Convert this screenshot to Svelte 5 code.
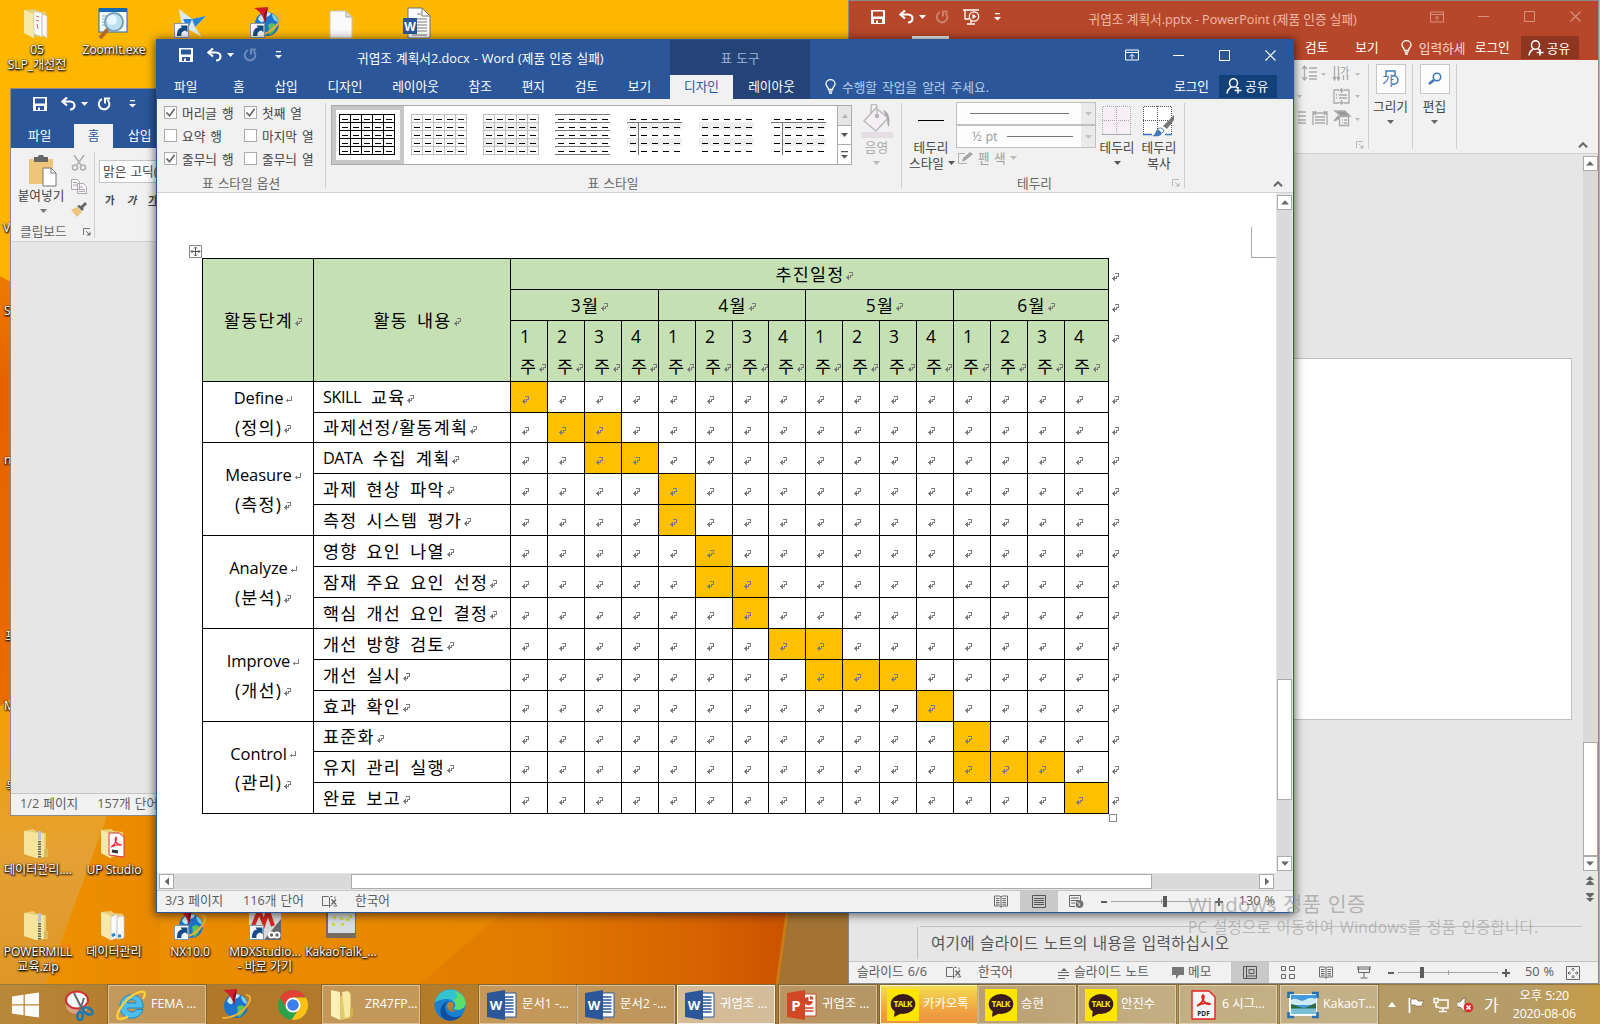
<script>
  const phases = [
    { en: 'Define', ko: '(정의)', tasks: [['교육', [0], 'SKILL'], ['과제선정/활동계획', [1, 2]]] },
    { en: 'Measure', ko: '(측정)', tasks: [['수집 계획', [2, 3], 'DATA'], ['과제 현상 파악', [4]], ['측정 시스템 평가', [4]]] },
    { en: 'Analyze', ko: '(분석)', tasks: [['영향 요인 나열', [5]], ['잠재 주요 요인 선정', [5, 6]], ['핵심 개선 요인 결정', [6]]] },
    { en: 'Improve', ko: '(개선)', tasks: [['개선 방향 검토', [7, 8]], ['개선 실시', [8, 9, 10]], ['효과 확인', [11]]] },
    { en: 'Control', ko: '(관리)', tasks: [['표준화', [12]], ['유지 관리 실행', [12, 13, 14]], ['완료 보고', [15]]] }
  ];
  const months = ['3월', '4월', '5월', '6월'];
  const weeks = Array.from({ length: 16 }, (_, i) => i);
  const tabs = ['파일', '홈', '삽입', '디자인', '레이아웃', '참조', '편지', '검토', '보기'];
  const options = [
    ['머리글 행', true], ['첫째 열', true],
    ['요약 행', false], ['마지막 열', false],
    ['줄무늬 행', true], ['줄무늬 열', false]
  ];
  const styles = ['black', 'grid', 'gridband', 'lines', 'first', 'band', 'firstband'];
  const five = [0, 1, 2, 3, 4];
  const desktop = [
    { x: 37, y: 7, icon: 'folder', label: ['05', 'SLP_개선전'] },
    { x: 114, y: 7, icon: 'zoomit', label: ['ZoomIt.exe'] },
    { x: 190, y: 7, icon: 'shard', label: [] },
    { x: 266, y: 7, icon: 'nx', label: [] },
    { x: 341, y: 7, icon: 'page', label: [] },
    { x: 416, y: 7, icon: 'worddoc', label: [] },
    { x: 38, y: 827, icon: 'zip', label: ['데이터관리....'] },
    { x: 114, y: 827, icon: 'pdffolder', label: ['UP Studio'] },
    { x: 38, y: 909, icon: 'zip', label: ['POWERMILL', '교육.zip'] },
    { x: 114, y: 909, icon: 'folderdocs', label: ['데이터관리'] },
    { x: 190, y: 909, icon: 'nx', label: ['NX10.0'] },
    { x: 265, y: 909, icon: 'mdx', label: ['MDXStudio...', '- 바로 가기'] },
    { x: 341, y: 909, icon: 'photo', label: ['KakaoTalk_...'] }
  ];
  const strays = [
    { x: 3, y: 220, t: 'V' }, { x: 4, y: 303, t: 'S' }, { x: 4, y: 452, t: 'n' },
    { x: 5, y: 629, t: '프' }, { x: 4, y: 698, t: 'M' }, { x: 6, y: 779, t: '목' }
  ];
  const tasks = [
    { kind: 'start', icon: 'start' },
    { kind: 'plain', icon: 'snip' },
    { kind: 'open', icon: 'ie', label: 'FEMA ...' },
    { kind: 'plain', icon: 'nxb' },
    { kind: 'plain', icon: 'chrome' },
    { kind: 'open', icon: 'explorer', label: 'ZR47FP...' },
    { kind: 'plain', icon: 'edge' },
    { kind: 'open', icon: 'word', label: '문서1 -...' },
    { kind: 'open', icon: 'word', label: '문서2 -...' },
    { kind: 'open active', icon: 'word', label: '귀엽조 ...' },
    { kind: 'open', icon: 'ppt', label: '귀엽조 ...' },
    { kind: 'open alert', icon: 'talk', label: '카카오톡' },
    { kind: 'open', icon: 'talk', label: '승현' },
    { kind: 'open', icon: 'talk', label: '안진수' },
    { kind: 'open', icon: 'pdf', label: '6 시그...' },
    { kind: 'open', icon: 'picture', label: 'KakaoT...' }
  ];
</script>

{#snippet mark(latin)}
  <svg class="mark" width="8" height="8" viewBox="0 0 8 8" fill="none" stroke="#7c7c7c" shape-rendering="crispEdges">
    {#if latin}
      <path d="M6.500 0v5M7 4.500H1" /><path d="M2.500 3v3M1.500 4v1" />
    {:else}
      <path d="M3 .5h4M6.500 0v4M7 3.500H4M4.500 3v3M5 5.500H0" /><path d="M1.500 4v3M2.500 3v5" />
    {/if}
  </svg>
{/snippet}

{#snippet caret(c)}
  <svg class="caret" width="7" height="4" viewBox="0 0 7 4"><path d="M0 0h7L3.500 4z" fill={c} /></svg>
{/snippet}

{#snippet save()}
  <svg class="q-save" width="14" height="14" viewBox="0 0 14 14"><path fill="currentColor" fill-rule="evenodd" d="M0 0h14v14H0zM2 1.500v5h10v-5zM3 9v4h2v-2.500h2V13h4V9z" /></svg>
{/snippet}

{#snippet undo()}
  <svg width="15" height="14" viewBox="0 0 15 14" fill="none" stroke="currentColor" stroke-width="2.200"><path d="M1.500 4.500H9c6 0 6 8 0 8" /><path d="M6 .5l-4.500 4 4.500 4" /></svg>
{/snippet}

{#snippet redo()}
  <svg width="14" height="14" viewBox="0 0 14 14" fill="none" stroke="currentColor" stroke-width="2"><path d="M5 2.200A5.300 5.300 0 1 0 10.500 3" /><path d="M8 6.500V1.500h5" /></svg>
{/snippet}

{#snippet more()}
  <svg width="7" height="8" viewBox="0 0 7 8" fill="currentColor"><path d="M1 0h5v1.200H1zM0 4h7L3.500 7.500z" /></svg>
{/snippet}

{#snippet winButtons()}
  <div class="win-buttons">
    <svg width="14" height="12" viewBox="0 0 14 12" fill="none" stroke="currentColor"><path d="M.5 1h13v10H.5zM.5 3.500h13M7 10V5.500M4.800 7.500L7 5.300l2.200 2.200" /></svg>
    <svg width="11" height="11" viewBox="0 0 11 11" stroke="currentColor"><path d="M0 5.500h11" /></svg>
    <svg width="11" height="11" viewBox="0 0 11 11" fill="none" stroke="currentColor"><path d="M.5.5h10v10H.5z" /></svg>
    <svg width="11" height="11" viewBox="0 0 11 11" stroke="currentColor" stroke-width="1.200"><path d="M.5.5l10 10M10.500.5l-10 10" /></svg>
  </div>
{/snippet}

{#snippet bulb()}
  <svg width="11" height="15" viewBox="0 0 11 15" fill="none" stroke="currentColor" stroke-width="1.300"><path d="M3.500 10.500C3.500 8 1 7.500 1 5a4.500 4.300 0 0 1 9 0c0 2.500-2.500 3-2.500 5.500z" /><path d="M3.500 12.200h4M4 14h3" /></svg>
{/snippet}

{#snippet share()}
  <svg width="16" height="16" viewBox="0 0 16 16" fill="none" stroke="currentColor" stroke-width="1.500"><ellipse cx="7.500" cy="5" rx="4" ry="4.300" /><path d="M1 15.500c.5-4 2.500-5.500 4.500-6.500M10 9l1.500 1M12 9v6.500M8.700 12.500h6.800" /></svg>
{/snippet}

{#snippet launcher(c)}
  <svg class="launcher" width="8" height="8" viewBox="0 0 8 8" fill="none" stroke={c}><path d="M.5 7V.5H7M3 3l4 4" /><path d="M7.500 3.500v4h-4z" fill={c} stroke="none" /></svg>
{/snippet}

{#snippet collapse()}
  <svg class="collapse" width="10" height="6" viewBox="0 0 10 6" fill="none" stroke="#666" stroke-width="2"><path d="M1 5.200l4-4 4 4" /></svg>
{/snippet}

{#snippet arrow(dir)}
  <span class="sbtn">
    <svg class={dir} width="8" height="5" viewBox="0 0 8 5"><path d="M0 4.500h8L4 .3z" fill="#686868" /></svg>
  </span>
{/snippet}

{#snippet book()}
  <svg width="16" height="13" viewBox="0 0 16 13" fill="none" stroke="#6a6a6a"><path d="M7.500 11.500l-1-1h-6v-9h6l1 1 1-1h2M7.500 2.500v10M7.500 11.500l1-1h1M13 1.500v2M14.500 10v1h-3" /><path d="M9.500 4.500l4.500 5M14 4.500l-4.500 5" stroke-width="1.500" /></svg>
{/snippet}

{#snippet reading()}
  <svg width="14" height="13" viewBox="0 0 14 13" fill="none" stroke="#6a6a6a"><path d="M.5 1h5L7 2l1.500-1h5v10h-5L7 12l-1.500-1h-5zM7 2v10.500M2 3.500h3.500M2 5.500h3.500M2 7.500h3.500M2 9.200h3.500M8.500 3.500H12M8.500 5.500H12M8.500 7.500H12M8.500 9.200H12" /></svg>
{/snippet}

{#snippet zoomBar(handle, tick)}
  <svg class="zoombar" width="122" height="13" viewBox="0 0 122 13">
    <path d="M0 6h6v2H0zM114 6h8v2h-8zM117 3h2v8h-2z" fill="#5c5c5c" />
    <path d="M10 6.500h100" stroke="#a6a6a6" /><path d="M{tick}.5 4v5" stroke="#a6a6a6" />
    <rect x={handle} y="1" width="4" height="11" fill="#5c5c5c" />
  </svg>
{/snippet}

{#snippet globe()}
  <circle cx="17" cy="17" r="12" fill="#1c74cc" />
  <path d="M8 12c2-5 8-8 13-6-1 4-6 3-7 7s-4 2-6-1z" fill="#c9ecf9" />
  <path d="M18 18c3-3 7-2 8 1-1 5-3 7-6 9-3-2 0-6-2-10z" fill="#5cc35a" />
  <path d="M22 7c4 1 6 5 6 8-3 0-6-4-6-8z" fill="#7bd2ee" />
  <path d="M27 6c8 0 4 12-10 20-7 3-14 4-13 2" fill="none" stroke="#eeae33" stroke-width="2" />
  <path d="M4 1l14-1-3 16C13 9 10 4 4 1z" fill="#cf1d2d" /><path d="M18 0l-3 16-1-9z" fill="#8d0e1e" />
{/snippet}

{#snippet shortcut()}
  <rect x=".5" y="16.500" width="14" height="14" fill="#f4f6f8" stroke="#8a97a8" /><path d="M3 29c0-6 2-8 5-8.500L6.500 18.500h7v7l-2-2C8 24 7 26 7.500 29z" fill="#174b85" />
{/snippet}

{#snippet folder()}
  <path d="M3 3l10-1 3 2 9 1v22l-13 4-9-5z" fill="#e9ce79" /><path d="M3 3l10 4v24l-10-5z" fill="#f8e9a8" /><path d="M13 7l4-2v24l-4 2z" fill="#dcb95a" />
{/snippet}

{#snippet icon(name)}
  <svg class="ico" width="32" height="32" viewBox="0 0 32 32">
    {#if name === 'folder'}
      {@render folder()}
      <path d="M13 4l8 2v24l-8-3zM21 7l5 2v22l-5-3z" fill="#fafafa" stroke="#c8c4b8" stroke-width=".7" /><path d="M15 9l3 1M15 13l3 1M16 17l1 5" stroke="#d66" />
    {:else if name === 'folderdocs'}
      {@render folder()}
      <path d="M13 8l6-3v24l-6 2zM19 8l7-1v22l-7 1z" fill="#fafafa" stroke="#c9c9c9" stroke-width=".7" /><path d="M14 27l3-2M20 27h3" stroke="#2785c8" stroke-width="3" />
    {:else if name === 'pdffolder'}
      {@render folder()}
      <path d="M11 6h10l5 4v20l-15-2z" fill="#fff" stroke="#d34" stroke-width="1" /><path d="M13 20c5-3 6-8 5-10-2 3 0 8 6 8-4-1-7 0-11 2z" fill="none" stroke="#e23" stroke-width="1.200" /><path d="M14 24l6 1" stroke="#333" stroke-width="3" />
    {:else if name === 'zip'}
      <path d="M2 4l9-2 4 3 9 1v23l-9 2-13-4z" fill="#e9ce79" /><path d="M2 4l20 3v23l-8 1-12-4z" fill="#f6e49a" /><path d="M22 22h4v8h-4z" fill="#d7bb5d" /><path d="M17.500 4v27" stroke="#5c6773" stroke-width="3" stroke-dasharray="1.500 1" /><path d="M16 4h3v9h-3z" fill="#b4c4d5" />
    {:else if name === 'zoomit'}
      <rect x="1" y="2" width="28" height="23" fill="#f4f9fc" stroke="#176fb0" /><path d="M1 1h28v4H1z" fill="#1669b2" /><path d="M4 9h10M4 12h8M4 15h8M4 18h8" stroke="#92a5b4" /><path d="M10 22l-8 9" stroke="#b76531" stroke-width="4" /><circle cx="16" cy="15" r="9" fill="#bde1f4" stroke="#7b9eb4" stroke-width="2" /><circle cx="14" cy="13" r="5" fill="#e7f7fe" />
    {:else if name === 'shard'}
      <path d="M5 2l13 10 14-3-11 11 7 10-14-8-4 9z" fill="#dce9f6" /><path d="M18 12l14-3-11 11zM9 12l9 0-4 10z" fill="#2684d8" />{@render shortcut()}
    {:else if name === 'nx'}
      {@render globe()}{@render shortcut()}
    {:else if name === 'nxb'}
      {@render globe()}
    {:else if name === 'page'}
      <path d="M5 4h16l6 6v21H5z" fill="#fafafa" stroke="#c9c3b6" /><path d="M21 4v6h6" fill="#ddd" stroke="#aaa" />
    {:else if name === 'worddoc'}
      <path d="M8 1h14l8 8v22H8z" fill="#fff" stroke="#6b7585" /><path d="M22 1v8h8M17 7h4M17 12h10M17 15h10M17 18h10M17 21h10M17 24h10M12 28h15" fill="none" stroke="#777" /><rect x="3" y="11" width="14" height="16" fill="#2b579a" /><text x="10" y="23.500" text-anchor="middle" font-size="12" font-weight="700" fill="#fff">W</text>
    {:else if name === 'mdx'}
      <path d="M0 0h32v31H0z" fill="#d8d8d8" /><path d="M32 10v21H15z" fill="#666" /><path d="M4 17L10 2l5 12 4-12 5 15" fill="none" stroke="#d4281c" stroke-width="4" /><circle cx="22.500" cy="26" r="2.600" fill="none" stroke="#fff" stroke-width="1.800" /><circle cx="28" cy="26" r="2.600" fill="none" stroke="#fff" stroke-width="1.800" />{@render shortcut()}
    {:else if name === 'photo'}
      <path d="M1 0h30v29H1z" fill="#756b60" /><path d="M3 0h27v24H3z" fill="#d7dce0" /><path d="M8 7h3v3H8zM15 8h3v3h-3zM24 6h3v3h-3zM7 14h3v3H7zM16 14h3v3h-3zM21 9h3v3h-3z" fill="#cddc3a" />
    {:else if name === 'start'}
      <path d="M3 7.500l11.500-1.700V15.300H3zM15.800 5.600L30 3.500v11.800H15.800zM3 16.500h11.500v9.700L3 24.500zM15.800 16.500H30v12l-14.200-2.100z" fill="#fff" />
    {:else if name === 'snip'}
      <ellipse cx="14" cy="17" rx="11" ry="8" fill="#d7a185" /><ellipse cx="14" cy="11" rx="11" ry="8.500" fill="#fafafa" stroke="#cf2f31" stroke-width="2" /><path d="M11 4l10 20M21 9L16 24" stroke="#606b72" stroke-width="2" /><ellipse cx="25" cy="22" rx="5" ry="3" fill="none" stroke="#1578b8" stroke-width="2.500" transform="rotate(30 25 22)" /><ellipse cx="17" cy="27" rx="2.800" ry="4" fill="none" stroke="#1578b8" stroke-width="2.500" />
    {:else if name === 'ie'}
      <path d="M28 19H12.500c.5 5 7 5 8.500 1.500h7C24.500 33 5 32 5 17.500 5 2 29 1 28 19zM12.500 14H21c-.8-4.500-7.700-4.500-8.500 0z" fill="#4fbdec" stroke="#1c86c7" /><path d="M5 30c-8 0 3-20 17-26 7-3 10-1 6 6M5 30c3 0 6-1 8-3" fill="none" stroke="#ffcf35" stroke-width="2.400" />
    {:else if name === 'chrome'}
      <circle cx="16" cy="16" r="15" fill="#2ba24c" /><path d="M3 8.500A15 15 0 0 1 29 8.500H16l-6.500 11z" fill="#e34133" /><path d="M16 8.500h13A15 15 0 0 1 14.500 31l7.500-11.500z" fill="#fbc116" /><circle cx="16" cy="16" r="7.500" fill="#fff" /><circle cx="16" cy="16" r="5.800" fill="#3f7fec" />
    {:else if name === 'explorer'}
      <path d="M2 1l9 2v28l-9-4z" fill="#fcf0b6" /><path d="M11 8l6-4 5 1v24l-11 2z" fill="#e5c96f" /><path d="M13 3l6-1 2 2v23l-5 2z" fill="#f8e9a5" /><path d="M21 19h3v8l-3 3z" fill="#d4b34f" />
    {:else if name === 'edge'}
      <circle cx="16" cy="16" r="15.500" fill="#187fd1" /><path d="M1 14C3-4 30-4 31.500 14c0 6-7 8-12 6 4-4 0-10-6-10-6 0-11 2-12.500 4z" fill="#35c3d0" /><path d="M20 2c7 2 12 7 11.500 13-1 5-7 7-12 5 4-4 2-8-1-9 7-1 5-6 1.500-9z" fill="#5ddd69" /><path d="M11 18c0 8 8 13 17 8-5 7-18 8-21 0-2-8 3-14 9-14-3 1-5 3-5 6z" fill="#114f9e" /><path d="M14 14c3-3 7 0 5 4-2 2 0 4 4 4-7 3-12-3-9-8z" fill="#b9812f" />
    {:else if name === 'word'}
      <path d="M17 4h13v24H17z" fill="#fff" stroke="#2b579a" /><path d="M19 8h8.500M19 11h8.500M19 14h8.500M19 17h8.500M19 20h8.500M19 23h8.500" stroke="#2b579a" stroke-width="1.300" /><path d="M1 4l18-3v30L1 28z" fill="#2b579a" /><text x="10" y="21" text-anchor="middle" font-size="13" font-weight="700" fill="#fff">W</text>
    {:else if name === 'ppt'}
      <path d="M17 5h13v22H17z" fill="#fff" stroke="#d24726" /><path d="M19 19h8.500M19 22h8.500" stroke="#d24726" stroke-width="1.500" /><circle cx="22.500" cy="12" r="4.300" fill="#d24726" /><path d="M22.500 12V7a5 5 0 0 1 5 5z" fill="#fff" /><path d="M24 10.500V7a4 4 0 0 1 3.500 3.500z" fill="#d24726" /><path d="M1 4l18-3v30L1 28z" fill="#d24726" /><text x="10" y="22" text-anchor="middle" font-size="15" font-weight="700" fill="#fff">P</text>
    {:else if name === 'talk'}
      <path d="M0 0h32v32H0z" fill="#fee500" /><ellipse cx="16" cy="15" rx="12.300" ry="10" fill="#391b1b" /><path d="M8 20l-1 8 8-4z" fill="#391b1b" /><text x="16" y="18.300" text-anchor="middle" font-size="8.500" font-weight="700" fill="#fee500" textLength="19">TALK</text>
    {:else if name === 'pdf'}
      <path d="M6 2h17l6 6v22H6z" fill="#f6f6f6" stroke="#e32222" stroke-width="1.400" stroke-linejoin="round" /><path d="M11 17c7-4 8-10 6-11-3 1 2 11 7 9-3-2-10 0-13 2z" fill="none" stroke="#e32222" stroke-width="1.600" /><text x="17.500" y="27" text-anchor="middle" font-size="6.500" font-weight="700" fill="#222">PDF</text>
    {:else if name === 'picture'}
      <path d="M2 5h28v22H2z" fill="#fff" /><path d="M4 6h25v19H4z" fill="#4599dd" /><path d="M4 11c6-4 9 3 14 0s8-2 11-1v6H4z" fill="#cdeaf8" /><path d="M4 15c6 1 10 4 13 4s8-4 12-5v6H4z" fill="#2e6d43" /><path d="M4 19.500h25V25H4z" fill="#79c0d8" /><path d="M1.500 9V4H7M25 4h5.500v5M1.500 23v5H7M25 28h5.500v-5" fill="none" stroke="#256fae" stroke-width="2.600" />
    {/if}
  </svg>
{/snippet}

{#snippet thumb(kind)}
  <svg width="56" height="42" viewBox="0 0 56 42" shape-rendering="crispEdges">
    {#if kind === 'gridband' || kind === 'band'}<path d="M0 8h55v8H0zM0 24h55v8H0z" fill="#f0f0f0" />{/if}
    {#if kind === 'first' || kind === 'firstband'}<path d="M0 8h55v8H0zM0 24h55v8H0z" fill="#f0f0f0" />{/if}
    {#if kind === 'firstband'}<path d="M0 9h11v23H0z" fill="#fff" />{/if}
    {#if kind === 'first' || kind === 'firstband'}<path d="M0 8.500h55M11.500 9v32" stroke="#777" />{/if}
    {#if kind === 'black' || kind === 'grid' || kind === 'gridband'}
      <path d="M0 .5h56M0 8.500h56M0 16.500h56M0 24.500h56M0 32.500h56M0 40.500h56M.5 0v41M11.500 0v41M22.500 0v41M33.500 0v41M44.500 0v41M55.500 0v41" stroke={kind === 'black' ? '#000' : '#bfbfbf'} />
    {/if}
    {#if kind === 'lines'}<path d="M0 .5h55M0 8.500h55M0 16.500h55M0 24.500h55M0 32.500h55M0 40.500h55" stroke="#777" />{/if}
    {#each five as r}
      {#each five as c}<rect x={3 + c * 11} y={5 + r * 8} width="6" height="1" fill="#000" />{/each}
    {/each}
  </svg>
{/snippet}

<main class="screen">
  <svg class="wallpaper" width="1600" height="1024" viewBox="0 0 1600 1024">
    <defs>
      <linearGradient id="top" x1="0" y1="0" x2="0" y2="1"><stop offset="0" stop-color="#feb800" /><stop offset="1" stop-color="#f9a800" /></linearGradient>
      <linearGradient id="mid" x1="0" y1="0" x2="0" y2="1"><stop offset="0" stop-color="#ee7a00" /><stop offset=".25" stop-color="#e56300" /><stop offset="1" stop-color="#e96c00" /></linearGradient>
      <linearGradient id="low" x1="0" y1="0" x2="1" y2="0"><stop offset="0" stop-color="#ef9400" /><stop offset=".3" stop-color="#e68300" /><stop offset=".65" stop-color="#e27c00" /><stop offset=".88" stop-color="#d66200" /><stop offset="1" stop-color="#c85000" /></linearGradient>
      <linearGradient id="pale" x1="0" y1="0" x2="0" y2="1"><stop offset="0" stop-color="#f4a000" /><stop offset=".5" stop-color="#e4a034" /><stop offset="1" stop-color="#dd9322" /></linearGradient>
    </defs>
    <rect width="1600" height="1024" fill="url(#top)" />
    <path d="M0 276l160 90v340L0 710z" fill="url(#mid)" />
    <path d="M0 800h800v224H0z" fill="url(#low)" />
    <path d="M0 706l12-8v118h95L31 1024H0z" fill="url(#pale)" />
    <path d="M420 984l82-71H160v71z" fill="#f29a00" opacity=".35" />
    <path d="M787 913h70v111h-87z" fill="#a27332" />
    <path d="M787 913l-10 71" stroke="#cc7a18" stroke-width="3" />
    <path d="M1500 984h100v40z" fill="#dba126" />
  </svg>

  {#each strays as s}
    <span class="stray" style:left="{s.x}px" style:top="{s.y}px">{s.t}</span>
  {/each}
  {#each desktop as d}
    <figure class="shortcut" style:left="{d.x - 45}px" style:top="{d.y}px">
      {@render icon(d.icon)}
      <figcaption>{#each d.label as line}<span>{line}</span>{/each}</figcaption>
    </figure>
  {/each}

  <!-- PowerPoint window -->
  <section class="window ppt">
    <header>
      <div class="title-row">
        <div class="qat">
          {@render save()}
          <i class="g16">{@render undo()}</i>
          <i class="g5">{@render caret('#fff')}</i>
          <i class="g10 dim">{@render redo()}</i>
          <svg class="show" width="17" height="16" viewBox="0 0 17 16" fill="none" stroke="currentColor" stroke-width="1.300"><path d="M0 1h16M2 1v9h4M8 11v3M4 15h8" /><circle cx="11" cy="7.500" r="4.700" /><path d="M9.500 5l4 2.500-4 2.500z" fill="currentColor" stroke="none" /></svg>
          <i class="g16">{@render more()}</i>
        </div>
        <h2>귀엽조 계획서.pptx - PowerPoint (제품 인증 실패)</h2>
        {@render winButtons()}
      </div>
      <div class="tab-row">
        <span class="sliver"></span>
        <span class="t1">검토</span><span class="t2">보기</span>
        <span class="tell">{@render bulb()}입력하세</span>
        <span class="login">로그인</span>
        <span class="share">{@render share()}공유</span>
      </div>
    </header>
    <div class="ribbon">
      <div class="group para">
        <svg width="62" height="66" viewBox="0 0 62 66" fill="none" stroke="#aaa" stroke-width="1.300">
          <path d="M3.500 2v14M1 5l2.500-3L6 5M1 13l2.500 3L6 13M8 4h8M8 8h8M8 12h8M8 15h8" />
          <path d="M33.500 2v14M37.500 2v14M32 13l1.500 3 1.500-3M36 13l1.500 3 1.500-3M42.500 11v5M46.500 11v5" />
          <path d="M38 26h-5v13h5M43 26h5v13h-5M40.500 24v5M38.500 27l2-2 2 2M40.500 41v-5M38.500 38l2 2 2-2M35 31h1M38 31h8M35 34h1M38 34h8" />
          <path d="M-3 48h8M-3 52h8M-3 56h8M-3 59h8M12 47v14M26 47v14M13 49h11M15 47l-2 2 2 2M23 47l2 2-2 2M14 53h10M14 56h10M14 59h10" />
          <path d="M34 47l6 5h9l-5-5zM33 57l4-5 3 2z" fill="#999" /><path d="M38.500 52.500h9v9h-9z" fill="#f4f0f4" /><path d="M41 56h1M43 56h3M41 59h1M43 59h3" />
          <path d="M20 9h5l-2.500 3zM54 9h5l-2.500 3zM54 31h5l-2.500 3zM54 54h5l-2.500 3zM-4 31h5l-2.500 3z" fill="#bbb" stroke="none" />
          <text x="39" y="11" font-size="10" fill="#999" stroke="none">가</text>
        </svg>
        {@render launcher('#bbb')}
      </div>
      <div class="group tall">
        <span class="tile"><svg width="18" height="18" viewBox="0 0 18 18" fill="none" stroke="#3f78b8" stroke-width="1.400"><path d="M4 6V1h9v5M10 6c8-2 8 10 0 8" /><text x="0" y="15" font-size="13" fill="#3f78b8" stroke="none">가</text></svg></span>
        <b>그리기</b>{@render caret('#666')}
      </div>
      <div class="group tall">
        <span class="tile"><svg width="14" height="14" viewBox="0 0 14 14" fill="none" stroke="#3f78b8"><circle cx="9" cy="5" r="3.700" stroke-width="1.600" /><path d="M6 8l-5 4" stroke-width="2.600" /></svg></span>
        <b>편집</b>{@render caret('#666')}
      </div>
      {@render collapse()}
    </div>
    <div class="ppt-body">
      <div class="stage">
        <div class="slide-zone"><div class="slide"></div></div>
        <div class="notes"><p>여기에 슬라이드 노트의 내용을 입력하십시오</p></div>
      </div>
      <div class="vscroll">
        {@render arrow('up')}
        <span class="before"></span><span class="thumb"></span>
        {@render arrow('down')}
        <svg class="pages" width="8" height="28" viewBox="0 0 8 28" fill="#666"><path d="M0 5l4-4 4 4zM0 9l4-4 4 4zM0 19l4 4 4-4zM0 23l4 4 4-4zM0 9h8v1H0zM0 18h8v1H0z" /></svg>
      </div>
    </div>
    <footer>
      <span class="f1">슬라이드 6/6</span>
      <i class="f2">{@render book()}</i>
      <span class="f3">한국어</span>
      <svg class="f4" width="12" height="12" viewBox="0 0 12 12" stroke="#666" fill="#666"><path d="M0 5.500h11M0 8.500h11M0 11.500h7" /><path d="M3 4l3-3 3 3z" stroke="none" /></svg>
      <span class="f5">슬라이드 노트</span>
      <svg class="f6" width="12" height="12" viewBox="0 0 12 12"><path d="M0 0h12v8H7l-3 4V8H0z" fill="#777" /></svg>
      <span class="f7">메모</span>
      <i class="on"><svg width="14" height="13" viewBox="0 0 14 13" fill="none" stroke="#555"><path d="M.5.500h13v12H.5zM3.500.500v12M6 3.500h5v4H6zM3.500 10h10" /></svg></i>
      <i class="v"><svg width="14" height="13" viewBox="0 0 14 13" fill="none" stroke="#666"><path d="M.5.500h4v4h-4zM8.500.500h5v4h-5zM.5 8.500h4v4h-4zM8.500 8.500h5v4h-5z" /></svg></i>
      <i class="v">{@render reading()}</i>
      <i class="v"><svg width="14" height="13" viewBox="0 0 14 13" fill="none" stroke="#666"><path d="M0 1h14M1.500 1v5.500h11V1M0 3h14M7 6.500v5M3.500 12h7" /></svg></i>
      {@render zoomBar(32, 60)}
      <span class="f8">50 %</span>
      <svg class="f9" width="14" height="14" viewBox="0 0 14 14" fill="none" stroke="#666"><path d="M.5.500h13v13H.5zM7 2v3M5.500 3.500L7 2l1.500 1.500M7 12V9M5.500 10.500L7 12l1.500-1.500M2 7h3M3.500 5.500L2 7l1.500 1.500M12 7H9M10.500 5.500L12 7l-1.500 1.500" /></svg>
    </footer>
  </section>

  <!-- Word window behind -->
  <section class="window word-back">
    <header>
      <div class="qat">
        {@render save()}
        <i class="g16">{@render undo()}</i>
        <i class="g5">{@render caret('#fff')}</i>
        <i class="g10">{@render redo()}</i>
        <i class="g18">{@render more()}</i>
      </div>
      <div class="back-tabs"><span>파일</span><span class="active">홈</span><span>삽입</span></div>
    </header>
    <div class="ribbon">
      <div class="clip">
        <div class="clip-tools">
          <div class="paste">
            <svg width="30" height="32" viewBox="0 0 30 32"><path d="M1 4h24v25H1z" fill="#edc57c" /><path d="M6 2h4c0-3 6-3 6 0h4v5H6z" fill="#666" /><path d="M15 13h8l5 5v13H15z" fill="#fff" stroke="#777" /><path d="M23 13v5h5" fill="none" stroke="#777" /></svg>
            <b>붙여넣기</b>{@render caret('#777')}
          </div>
          <div class="mini">
            <svg width="16" height="16" viewBox="0 0 16 16" fill="none" stroke="#b0b0b0" stroke-width="1.600"><path d="M3 0l7 10M13 0L6 10" /><circle cx="4" cy="12.500" r="2.500" /><circle cx="12" cy="12.500" r="2.500" /></svg>
            <svg width="16" height="15" viewBox="0 0 16 15" fill="#f4f4f4" stroke="#b0a8b0"><path d="M.5.500h6l2 2v8h-8zM6.500 4.500h6l3 3v7h-9z" /><path d="M2 3.500h4M2 6h4M8 8h4M8 10.500h6M8 12.500h6" /></svg>
            <svg width="17" height="15" viewBox="0 0 17 15"><path d="M0 8l6-3 5 5-5 5z" fill="#edc57c" /><path d="M6 4l5 5 2-2-1-1 4-4-2-2-4 4-2-1z" fill="#666" /></svg>
          </div>
        </div>
        <div class="clip-label">클립보드 {@render launcher('#777')}</div>
      </div>
      <div class="font-box"><div class="font-name">맑은 고딕(본문</div><div class="ga"><b>가</b><b class="it">가</b><b class="ul">가</b></div></div>
    </div>
    <div class="back-doc"></div>
    <footer><span>1/2 페이지</span><span>157개 단어</span></footer>
  </section>

  <!-- Word window in front -->
  <section class="window word">
    <header>
      <div class="head-left">
        <div class="title-row">
          <div class="qat">
            {@render save()}
            <i class="g16">{@render undo()}</i>
            <i class="g5">{@render caret('#fff')}</i>
            <i class="g10 dim">{@render redo()}</i>
            <i class="g18">{@render more()}</i>
          </div>
          <h2>귀엽조 계획서2.docx - Word (제품 인증 실패)</h2>
        </div>
        <nav>{#each tabs as t}<span>{t}</span>{/each}</nav>
      </div>
      <div class="context">
        <div class="context-title">표 도구</div>
        <div class="context-tabs"><span class="active">디자인</span><span>레이아웃</span></div>
      </div>
      <div class="head-right">
        {@render winButtons()}
        <div class="tab-row">
          <span class="tell">{@render bulb()}수행할 작업을 알려 주세요.</span>
          <span class="login">로그인</span>
          <span class="share">{@render share()}공유</span>
        </div>
      </div>
    </header>

    <div class="ribbon">
      <div class="group opts">
        <div class="checks">
          {#each options as [label, on]}
            <label><span class="box">{#if on}<svg width="11" height="11" viewBox="0 0 11 11" fill="none" stroke="#666" stroke-width="1.700"><path d="M1.500 5.500l3 3.200L9.500 2" /></svg>{/if}</span>{label}</label>
          {/each}
        </div>
        <div class="glabel">표 스타일 옵션</div>
      </div>
      <div class="group styles">
        <div class="body">
          <div class="gallery">
            {#each styles as s, i}<span class="swatch" class:selected={i === 0}>{@render thumb(s)}</span>{/each}
            <div class="gscroll">
              <span class="off"><svg width="6" height="4" viewBox="0 0 6 4"><path d="M0 4h6L3 0z" fill="#b5b5b5" /></svg></span>
              <span>{@render caret('#555')}</span>
              <span><svg width="7" height="8" viewBox="0 0 7 8" fill="#555"><path d="M0 0h7v1.200H0zM0 4h7L3.500 7.500z" /></svg></span>
            </div>
          </div>
          <div class="big shade">
            <div class="pic"><svg width="34" height="34" viewBox="0 0 34 34" fill="none" stroke="#b8b8b8" stroke-width="1.400"><path d="M4 17L16 4l12 10-12 13z" fill="#f6f0f6" /><path d="M11 10V3c0-4 6-4 6 0v9" /><circle cx="17" cy="12" r="1.500" fill="#aaa" /><path d="M23 6c7 2 7 10 6 17-3-3-1-7-2-9z" fill="#aaa" stroke="none" /><path d="M1 28h32v6H1z" fill="#e5dfe5" stroke="none" /></svg></div>
            <b>음영</b><b>{@render caret('#bbb')}</b>
          </div>
        </div>
        <div class="glabel">표 스타일</div>
      </div>
      <div class="group borders">
        <div class="body">
          <div class="big bstyle"><div class="pic"><span class="rule"></span></div><b>테두리</b><b class="with">스타일 {@render caret('#555')}</b></div>
          <div class="combos">
            <div class="combo"><span class="stroke one"></span><i>{@render caret('#c3c3c3')}</i></div>
            <div class="combo"><em>½ pt</em><span class="stroke two"></span><i>{@render caret('#c3c3c3')}</i></div>
            <div class="pen"><svg width="16" height="13" viewBox="0 0 16 13" fill="none" stroke="#b0b0b0"><path d="M7 1.500H.5v10H9" /><path d="M4 10l1-4 7-6 3 2-7 6z" fill="#a6a6a6" stroke="none" /></svg>펜 색 {@render caret('#bbb')}</div>
          </div>
          <div class="big bd"><div class="pic"><svg width="30" height="30" viewBox="0 0 30 30" fill="none" stroke="#aaa"><path d="M.5.500h28v28H.5z" fill="#f6f0f6" stroke="none" /><path d="M.5 28V.500h28V28M14.500 0v28M0 14.500h28" stroke-dasharray="1 1" /><path d="M0 28.500h29" /></svg></div><b>테두리</b><b>{@render caret('#555')}</b></div>
          <div class="big bp"><div class="pic"><svg width="32" height="32" viewBox="0 0 32 32" fill="none" stroke="#555"><path d="M.5.500h28v28H.5z" fill="#fff" stroke="none" /><path d="M.5 28V.500h28V28M14.500 0v28M0 14.500h28" stroke-dasharray="1 1" /><path d="M0 28.500h9M22 28.500h7" stroke="#3f78b8" stroke-width="1.500" /><path d="M9 30c4-1 3-5 6-7l4 3c0 4-4 5-10 4z" fill="#3f78b8" stroke="none" /><path d="M15 23c2-2 5-1 6 2l-2 2" fill="#fff" stroke="#3f78b8" /><path d="M20 20l4 3 7-9V9z" fill="#777" stroke="none" /></svg></div><b>테두리</b><b>복사</b></div>
        </div>
        <div class="glabel">테두리{@render launcher('#bbb')}</div>
      </div>
      {@render collapse()}
    </div>

    <div class="doc-row">
      <div class="doc">
        <svg class="handle" width="13" height="13" viewBox="0 0 13 13" fill="none" stroke="#555"><path d="M.5.500h12v12H.5z" fill="#fff" stroke="#888" /><path d="M6.500 2v9M2 6.500h9M5 3.500l1.500-1.500L8 3.500M5 9.500L6.500 11 8 9.500M3.500 5L2 6.500 3.500 8M9.500 5L11 6.500 9.500 8" /></svg>
        <span class="corner"></span>
        <div class="plan">
          <div class="cell head tall-head"><span>활동단계</span>{@render mark(false)}</div>
          <div class="cell head tall-head"><span>활동 내용</span>{@render mark(false)}</div>
          <div class="cell head span-all"><span>추진일정</span>{@render mark(false)}</div>
          <div class="end">{@render mark(false)}</div>
          {#each months as m}<div class="cell head month"><span>{m}</span>{@render mark(false)}</div>{/each}
          <div class="end">{@render mark(false)}</div>
          {#each weeks as w}<div class="cell head week"><span>{(w % 4) + 1}</span><div><span>주</span>{@render mark(false)}</div></div>{/each}
          <div class="end">{@render mark(false)}</div>
          {#each phases as p}
            <div class="cell phase" style:grid-row="span {p.tasks.length}">
              <div><span class="en">{p.en}</span>{@render mark(true)}</div>
              <div><span>{p.ko}</span>{@render mark(false)}</div>
            </div>
            {#each p.tasks as [name, on, latin]}
              <div class="cell task">{#if latin}<span class="caps">{latin}</span>{/if}<span>{name}</span>{@render mark(false)}</div>
              {#each weeks as w}<div class="cell slot" class:on={on.includes(w)}>{@render mark(false)}</div>{/each}
              <div class="end">{@render mark(false)}</div>
            {/each}
          {/each}
        </div>
        <div class="plan-foot"></div>
        <span class="grip"></span>
      </div>
      <div class="vscroll">
        {@render arrow('up')}
        <span class="before"></span><span class="thumb"></span><span class="after"></span>
        {@render arrow('down')}
      </div>
    </div>
    <div class="hscroll">
      {@render arrow('left')}<span class="before"></span><span class="thumb"></span><span class="after"></span>{@render arrow('right')}
    </div>
    <footer>
      <span class="s1">3/3 페이지</span><span class="s2">116개 단어</span>
      <i class="s3">{@render book()}</i><span class="s4">한국어</span>
      <i class="v push">{@render reading()}</i>
      <i class="on"><svg width="14" height="13" viewBox="0 0 14 13" fill="none" stroke="#555"><path d="M.5.500h13v12H.5zM2 3.500h10M2 5.500h10M2 7.500h10M2 9.500h10" /></svg></i>
      <i class="v"><svg width="15" height="13" viewBox="0 0 15 13" fill="none" stroke="#666"><path d="M11.500 5V.500H.5v11H6M2 3h8M2 5.500h7M2 8h4" /><circle cx="10.500" cy="9" r="3.500" fill="#777" /><path d="M8 8c2-1 3 1 2 3" stroke="#fff" /></svg></i>
      {@render zoomBar(62, 60)}
      <span class="s5">130 %</span>
    </footer>
  </section>

  <div class="activate"><p class="w1">Windows 정품 인증</p><p class="w2">PC 설정으로 이동하여 Windows를 정품 인증합니다.</p></div>

  <!-- Taskbar -->
  <div class="taskbar">
    {#each tasks as t}
      <div class="task-item {t.kind}">{@render icon(t.icon)}{#if t.label}<span>{t.label}</span>{/if}</div>
    {/each}
    <div class="tray">
      <svg width="8" height="5" viewBox="0 0 8 5"><path d="M0 5h8L4 0z" fill="#fff" /></svg>
      <svg class="y1" width="17" height="16" viewBox="0 0 17 16"><path d="M1.500 1v15" stroke="#fff" stroke-width="1.800" /><path d="M3 2h6l1 2h6l-2 3 1 2H8L7 8H3z" fill="#fff" stroke="#6b5a3a" stroke-width=".6" /></svg>
      <svg class="y2" width="16" height="16" viewBox="0 0 16 16" fill="none" stroke="#fff" stroke-width="1.500"><path d="M6 3h9v8H6M10 11v3M6 14.500h8M1 1.500h4v4H1zM3 6v4h3" /></svg>
      <svg class="y3" width="17" height="16" viewBox="0 0 17 16"><path d="M0 5h3l5-5v15l-5-5H0z" fill="#fff" stroke="#6b5a3a" stroke-width=".7" /><circle cx="11.500" cy="10.500" r="4.800" fill="#dc2d2d" /><path d="M9.500 8.500l4 4M13.500 8.500l-4 4" stroke="#fff" stroke-width="1.500" /></svg>
      <span class="ime">가</span>
      <div class="clock"><span>오후 5:20</span><span>2020-08-06</span></div>
    </div>
  </div>
</main>

<style>
  :global(body) { margin: 0; overflow: hidden; }
  .screen, .screen :global(*) { box-sizing: border-box; }
  .screen { position: relative; width: 1600px; height: 1024px; overflow: hidden; font: 400 12.7px/16px "Open Sans", "Noto Sans CJK KR", sans-serif; color: #444; white-space: nowrap; }
  svg { display: block; flex: none; }
  i, em { font-style: normal; }
  b { font-weight: inherit; }
  h2, p, figure { margin: 0; font-weight: inherit; font-size: inherit; }
  .wallpaper { position: absolute; inset: 0; }

  .shortcut { position: absolute; width: 90px; display: flex; flex-direction: column; align-items: center; }
  figcaption { display: flex; flex-direction: column; align-items: center; margin-top: 3px; line-height: 15px; }
  figcaption, .stray { color: #fff; font-size: 12.100px; letter-spacing: -.05px; text-shadow: 1px 1px 2px #000, 0 1px 2px #000, 0 0 2px #000a; }
  .stray { position: absolute; }

  .window { position: absolute; display: flex; flex-direction: column; overflow: hidden; word-spacing: .8px; }
  .qat { display: flex; align-items: center; color: #fff; }
  .g16 { margin-left: 14px; } .g5 { margin-left: 5px; } .g10 { margin-left: 9px; } .g18 { margin-left: 18px; }
  .dim { opacity: .3; }
  .win-buttons { display: flex; color: #fff; }
  .win-buttons svg { margin: 0 17.500px; }
  .win-buttons svg:first-child { margin: 0 16px; }
  .win-buttons { align-items: center; }
  .tell, .share { display: flex; align-items: center; }
  .launcher { margin-left: auto; }

  /* scrollbars */
  .sbtn { display: grid; place-items: center; width: 15px; height: 15px; flex: none; background: #fff; border: 1px solid #ababab; }
  .sbtn .down { transform: rotate(180deg); } .sbtn .left { transform: rotate(-90deg); } .sbtn .right { transform: rotate(90deg); }
  .vscroll { display: flex; flex-direction: column; align-items: center; background: #e6e6e6; }
  .vscroll span:not(.sbtn) { width: 15px; background: #dadada; }
  .vscroll .thumb, .hscroll .thumb { background: #fff !important; border: 1px solid #ababab; }

  footer { display: flex; align-items: center; background: #f1f1f1; border-top: 1px solid #c6c6c6; color: #5c5c5c; flex: none; }
  footer > span { padding-bottom: 3px; }
  footer .v, footer .on { width: 38px; height: 100%; display: grid; place-items: center; padding-bottom: 1px; }
  footer .on { background: #c9c9c9; }
  .ribbon { background: #f1f1f1; border-bottom: 1px solid #d2d2d2; display: flex; flex: none; }

  /* PowerPoint */
  .ppt { left: 848px; top: 0; width: 751px; height: 984px; border: 1px solid #8a8a8a; background: #e6e6e6; }
  .ppt header { height: 59px; background: #b7472a; flex: none; }
  .ppt .title-row { height: 35px; display: flex; align-items: center; padding-bottom: 4px; }
  .ppt .qat { width: 240px; padding-left: 22px; }
  .ppt .qat .show { margin-left: 14px; }
  .ppt h2 { width: 330px; padding-top: 4px; color: #f0baa9; word-spacing: 0; letter-spacing: -.04px; }
  .ppt .win-buttons { color: #d9907d; margin-left: -4px; }
  .ppt .tab-row { height: 24px; display: flex; align-items: center; color: #fff; padding-bottom: 1px; }
  .ppt .sliver { width: 37px; height: 24px; margin-left: 63px; background: #f1f1f1; }
  .ppt .t1 { margin-left: 356px; } .ppt .t2 { margin-left: 27px; }
  .ppt .t1, .ppt .t2, .ppt .login { padding-bottom: 2px; }
  .ppt .tell { margin-left: 22px; gap: 7px; width: 69px; color: #f7d6cc; }
  .ppt .tell svg { color: #fff; }
  .ppt .login { width: 46px; margin-left: 5px; }
  .share { padding: 0 0 0 7px; gap: 3px; width: 58px; height: 23px; }
  .ppt .share { background: #8f3621; }
  .ppt .ribbon { height: 94px; padding-top: 4px; padding-left: 448px; position: relative; }
  .ppt .group { height: 85px; border-right: 1px solid #cfcfcf; display: flex; }
  .ppt .para { width: 72px; align-items: flex-end; padding: 0 4px 0 4px; }
  .ppt .para svg:first-child { align-self: flex-start; overflow: visible; margin-right: -10px; }
  .ppt .para :global(.launcher) { margin-left: auto; }
  .ppt .tall { width: 44px; flex-direction: column; align-items: center; }
  .tile { display: grid; place-items: center; width: 30px; height: 30px; border: 1px solid #c6c6c6; background: #fdfdfd; }
  .ppt .tall b { margin: 3px 0 5px; line-height: 18px; color: #444; }
  .ppt .collapse { position: absolute; right: 10px; bottom: 5px; }
  .ppt-body { flex: 1; display: flex; min-height: 0; }
  .stage { width: 733px; display: flex; flex-direction: column; }
  .slide-zone { height: 773px; padding: 204px 10px 0 200px; border-bottom: 1px solid #c0c0c0; margin-left: 71px; }
  .slide { height: 362px; background: #fff; border: 1px solid #c0c0c0; margin-right: 0; }
  .notes { flex: 1; margin: 0 0 2px 0; padding: 8px 0 0 13px; margin-left: 68px; border-left: 1px solid #c0c0c0; font-size: 15.700px; line-height: 16px; letter-spacing: .15px; word-spacing: 1.100px; color: #555; }
  .ppt .vscroll { width: 16px; padding-top: 2px; }
  .ppt .vscroll .before { height: 571px; }
  .ppt .vscroll .thumb { height: 114px; }
  .pages { margin-top: 4px; }
  .ppt footer { height: 22px; }
  .f1 { margin-left: 8px; width: 89px; } .f2 { width: 32px; } .f3 { width: 80px; } .f4 { margin-right: 4px; } .f5 { width: 98px; letter-spacing: .15px; } .f6 { margin-right: 4px; } .f7 { width: 43px; }
  .ppt .zoombar { margin-left: 5px; }
  .f8 { margin: 0 12px 0 15px; }

  /* Word, back window */
  .word-back { left: 10px; top: 88px; width: 260px; height: 728px; border: 1px solid #8a8a8a; background: #e6e6e6; }
  .word-back header { height: 59px; background: #2b579a; flex: none; color: #fff; }
  .word-back .qat { height: 35px; padding: 0 0 5px 22px; }
  .back-tabs { display: flex; height: 24px; line-height: 23px; padding-left: 17px; }
  .back-tabs span:first-child { width: 46px; }
  .back-tabs .active { width: 39px; background: #f1f1f1; color: #2b579a; text-align: center; margin-right: 15px; }
  .word-back .ribbon { height: 94px; }
  .clip { width: 84px; height: 86px; margin-top: 4px; border-right: 1px solid #cfcfcf; }
  .clip-tools { display: flex; height: 72px; }
  .paste { width: 60px; display: flex; flex-direction: column; align-items: center; padding: 3px 0 0 4px; }
  .paste b { line-height: 17px; margin: 0 4px 5px 0; }
  .mini { display: flex; flex-direction: column; gap: 8px; padding-top: 3px; }
  .clip-label { display: flex; align-items: center; padding: 0 3px 0 9px; color: #666; line-height: 15px; }
  .font-box { padding: 12px 0 0 4px; }
  .font-name { width: 160px; height: 23px; line-height: 21px; border: 1px solid #c6c6c6; background: #fff; padding-left: 3px; }
  .ga { display: flex; gap: 12px; padding: 9px 0 0 6px; font-size: 10.500px; }
  .ga b { font-weight: 700; } .ga .it { font-style: italic; } .ga .ul { text-decoration: underline; }
  .back-doc { flex: 1; }
  .word-back footer { height: 22px; padding-left: 9px; gap: 19px; }

  /* Word, front window */
  .word { left: 156px; top: 39px; width: 1138px; height: 874px; border: 1px solid #2b579a; background: #fff; box-shadow: 0 1px 9px 1px #0009; }
  .word header { height: 59px; background: #2b579a; display: flex; flex: none; color: #fff; }
  .head-left { width: 513px; }
  .word .title-row { height: 35px; display: flex; padding-left: 22px; }
  .word .title-row .qat { width: 178px; height: 30px; }
  .word h2 { line-height: 36px; letter-spacing: -.02px; }
  nav { display: flex; gap: 29.700px; padding-left: 17px; line-height: 22px; }
  nav span:first-child { margin-right: 6px; }
  .context { width: 140px; background: #244478; }
  .context-title { height: 35px; line-height: 36px; text-align: center; color: #9db4d8; }
  .context-tabs { display: flex; line-height: 22px; height: 24px; text-align: center; }
  .context-tabs .active { width: 63px; background: #f1f1f1; color: #2b579a; }
  .context-tabs span:last-child { width: 77px; }
  .head-right { flex: 1; display: flex; flex-direction: column; align-items: flex-end; }
  .head-right .win-buttons { height: 35px; padding-bottom: 5px; }
  .head-right .tab-row { display: flex; width: 100%; height: 24px; align-items: center; padding: 0 16px 1px 15px; }
  .head-right .tell { gap: 6px; color: #b7cdee; word-spacing: 1.800px; }
  .head-right .tell svg { color: #fff; }
  .head-right .login { margin-left: auto; margin-right: 10px; padding-bottom: 1px; }
  .head-right .share { background: #124078; padding-bottom: 1px; }
  .word .ribbon { height: 94px; padding-top: 4px; position: relative; }
  .word .group { height: 85px; border-right: 1px solid #cfcfcf; }
  .opts { width: 169px; padding-left: 7px; }
  .checks { display: grid; grid-template-columns: 80px 1fr; grid-auto-rows: 23px; margin-top: -2px; height: 76px; word-spacing: 1.600px; }
  .checks label { display: flex; align-items: center; gap: 5px; }
  .box { width: 13px; height: 13px; border: 1px solid #ababab; background: #fff; }
  .glabel { display: flex; justify-content: center; line-height: 12px; color: #666; }
  .opts .glabel { padding-right: 7px; }
  .styles { width: 576px; padding-left: 5px; }
  .styles .glabel { padding-right: 6px; }
  .group .body { display: flex; height: 74px; }
  .gallery { width: 521px; height: 60px; margin-top: 2px; border: 1px solid #ababab; background: #fff; display: flex; }
  .swatch { width: 72px; height: 58px; display: grid; place-items: center; flex: none; padding-right: 2px; }
  .selected { border: 4px solid #c6c6c6; }
  .gscroll { flex: 1; display: grid; grid-template-rows: 20px 19px 19px; margin-left: 1px; }
  .gscroll span { display: grid; place-items: center; border-left: 1px solid #ababab; border-bottom: 1px solid #ababab; }
  .gscroll span:last-child { border-bottom: 0; }
  .gscroll .off { background: #e6e6e6; }
  .big { display: flex; flex-direction: column; align-items: center; }
  .big .pic { height: 36px; padding-top: 3px; }
  .big b { height: 16px; display: flex; align-items: center; }
  .shade { width: 49px; color: #aaa; } .shade .pic { padding-top: 1px; }
  .borders { width: 283px; }
  .bstyle { width: 54px; padding-left: 4px; } .bstyle .with { gap: 4px; margin-left: 2px; }
  .rule { display: block; width: 26px; height: 1px; margin-top: 14px; background: #000; }
  .combos { width: 141px; margin-top: -1px; }
  .combo { display: flex; align-items: center; width: 140px; height: 23px; background: #fdfdfd; border: 1px solid #c0c0c0; color: #999; }
  .combo i { width: 14px; height: 100%; display: grid; place-items: center; background: #eaeaea; margin-left: auto; }
  .combo em { margin-left: 15px; width: 35px; padding-bottom: 2px; letter-spacing: -.2px; }
  .stroke { height: 1px; background: #777; }
  .one { width: 99px; margin-left: 13px; margin-top: -1px; } .two { width: 66px; }
  .pen { display: flex; align-items: center; gap: 4px; height: 20px; padding-left: 2px; color: #a0a0a0; word-spacing: 1px; }
  .bd { width: 40px; } .bp { width: 44px; }
  .borders .glabel { padding: 0 4px 0 115px; justify-content: flex-start; align-items: center; }
  .word .collapse { position: absolute; right: 10px; bottom: 5px; }

  .doc-row { display: flex; height: 680px; flex: none; }
  .doc { width: 1119px; position: relative; padding: 65px 0 0 45px; }
  .handle { position: absolute; left: 32px; top: 52px; }
  .corner { position: absolute; left: 1094px; top: 34px; width: 25px; height: 31px; border: solid #ababab; border-width: 0 0 1px 1px; }
  .grip { position: absolute; left: 952px; top: 621px; width: 8px; height: 8px; border: 1px solid #888; }
  .plan { display: grid; width: 930px; grid-template-columns: 111px 197px repeat(6, 37px) 36px repeat(8, 37px) 44px 20px;
    grid-template-rows: 31px 31px 61px 31px 30px repeat(9, 31px) 30px 31px 31px;
    color: #000; font-size: 17.4px; line-height: 29px; letter-spacing: 1.2px; word-spacing: 3.500px; }
  .plan-foot { width: 907px; height: 1px; background: #000; }
  .cell { border: solid #000; border-width: 1px 0 0 1px; display: flex; align-items: center; }
  .cell span { display: block; }
  .mark { margin: 4px 0 0 2px; }
  .head { background: #c5e0b3; justify-content: center; padding-left: 11px; }
  .tall-head { grid-row: span 3; }
  .span-all { grid-column: span 16; }
  .month { grid-column: span 4; }
  .week { flex-direction: column; align-items: flex-start; padding-left: 9px; line-height: 30px; }
  .week div, .phase div { display: flex; align-items: center; }
  .phase { flex-direction: column; justify-content: center; padding: 1px 0 0 11px; line-height: 29.500px; }
  .phase .en { letter-spacing: -.1px; font-size: 16.500px; }
  .caps { letter-spacing: -.5px; font-size: 16.300px; margin-right: 10px; }
  .task { padding: 0 0 0 9px; }
  .slot { padding: 14px 0 0 9px; align-items: flex-start; }
  .slot .mark, .end .mark { margin-top: 0; }
  .on.slot { background: #ffc000; }
  .end { padding: 15px 0 0 1px; border-left: 1px solid #000; }
  .word .vscroll { width: 17px; padding-top: 2px; }
  .word .vscroll .before { height: 469px; } .word .vscroll .thumb { height: 121px; } .word .vscroll .after { height: 56px; }
  .hscroll { height: 17px; display: flex; align-items: center; padding-left: 2px; background: #e6e6e6; flex: none; }
  .hscroll span:not(.sbtn) { height: 15px; background: #dadada; }
  .hscroll .before { width: 177px; } .hscroll .thumb { width: 801px; } .hscroll .after { width: 107px; }
  .word footer { flex: 1; }
  .s1 { margin-left: 8px; width: 78px; } .s2 { width: 79px; } .s3 { width: 33px; }
  .push { margin-left: auto; }
  .word .zoombar { margin-left: 5px; }
  .s5 { margin: 0 18px 0 16px; }

  .activate { position: absolute; left: 1188px; top: 891px; }
  .activate .w1 { font-size: 20.500px; line-height: 27px; color: #8f8f8f99; letter-spacing: .2px; word-spacing: 1px; }
  .activate .w2 { font-size: 15.500px; line-height: 19px; color: #8f8f8f88; letter-spacing: .22px; word-spacing: 1.200px; }

  /* taskbar */
  .taskbar { position: absolute; left: 0; top: 984px; width: 1600px; height: 40px; display: grid; color: #fff;
    grid-template-columns: 50px 58px 98px 58px 58px 98px 59px 98px 100px 102px 101px 98px 100px 101px 101px 99px 1fr;
    background: linear-gradient(90deg, #b9893a 0, #b0782a 10%, #b57c2b 30%, #a87833 47%, #a0793c 55%, #b29860 72%, #b69c68 95%, #c79c45 100%); border-top: 1px solid #9a7a3c; }
  .task-item { display: flex; align-items: center; justify-content: center; }
  .task-item span { padding-bottom: 1px; }
  .open { justify-content: flex-start; gap: 4px; padding-left: 6px; background: #ffffff38; border: 1px solid #ffffff66; outline: 1px solid #60460f66; outline-offset: 0; width: 98px; height: 39px; font-size: 12.400px; }
  .active.open { background: #ffffff80; border-color: #fffc; }
  .alert { background: linear-gradient(#f3dc52, #f0a040 70%, #ea9440); border-color: #fff8c8; }
  .tray { display: flex; align-items: center; padding-left: 9px; }
  .y1 { margin-left: 12px; } .y2 { margin-left: 8px; } .y3 { margin-left: 8px; }
  .ime { font-size: 16px; margin-left: 10px; }
  .clock { display: flex; flex-direction: column; align-items: center; margin-left: 14px; line-height: 18px; font-size: 12.400px; letter-spacing: -.15px; }
</style>
